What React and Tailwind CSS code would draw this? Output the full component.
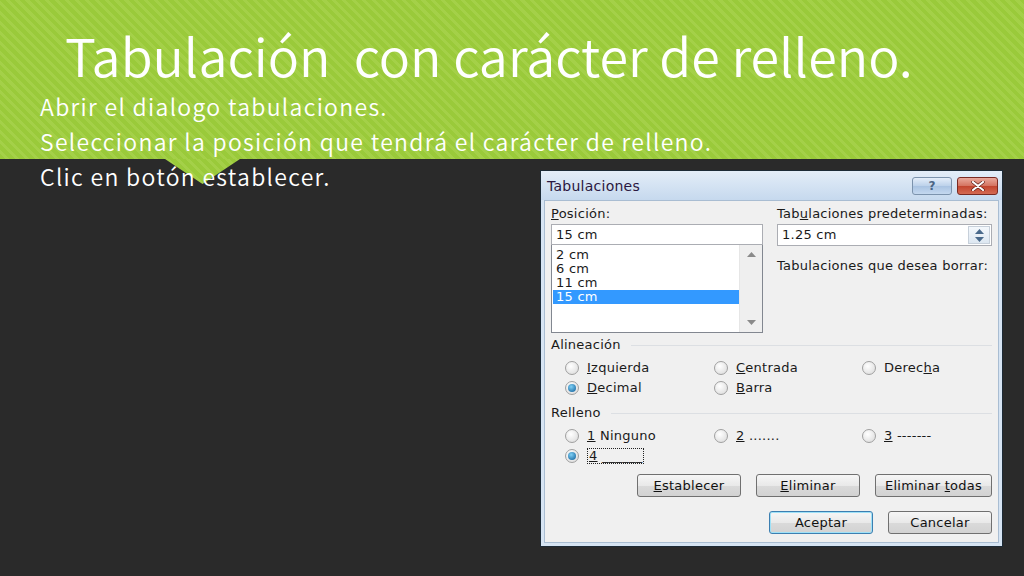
import React from 'react'

// Radio button as drawn by Windows 7 classic dialogs
function Radio({ checked }) {
  return (
    <span className="inline-flex h-[14px] w-[14px] shrink-0 items-center justify-center rounded-full border border-[#a0a0a0] bg-[radial-gradient(circle_at_40%_35%,#ffffff,#d8d8d8)]">
      {checked && (
        <span className="h-[8px] w-[8px] rounded-full bg-[radial-gradient(circle_at_40%_35%,#7fd0f5,#0c5a96)]" />
      )}
    </span>
  )
}

function Option({ checked, children, focus }) {
  return (
    <div className="flex h-[20px] items-center gap-[8px]">
      <Radio checked={checked} />
      <span className={focus ? 'border border-dotted border-[#222] px-[1px] leading-[14px]' : ''}>{children}</span>
    </div>
  )
}

function GroupLabel({ children }) {
  return (
    <div className="flex h-[20px] items-center gap-[10px]">
      <span>{children}</span>
      <div className="h-px flex-1 bg-[#dcdfe3]" />
    </div>
  )
}

function Btn({ children, w, primary }) {
  return (
    <button
      className={
        'h-[23px] rounded-[3px] border bg-[linear-gradient(#f6f6f6,#e9e9e9_50%,#dadada_51%,#d2d2d2)] text-[#111] ' +
        w +
        (primary ? ' border-[#3c7fb1] shadow-[inset_0_0_0_1px_#9fe1f7]' : ' border-[#707070]')
      }
    >
      {children}
    </button>
  )
}

function Arrow({ up, color = '#8a8a8a' }) {
  return (
    <svg width="9" height="5" viewBox="0 0 9 5">
      <path d={up ? 'M0 5 L4.5 0 L9 5 Z' : 'M0 0 L4.5 5 L9 0 Z'} fill={color} />
    </svg>
  )
}

function Dialog() {
  return (
    <div className="flex h-[377px] w-[463px] flex-col border border-[#1c2a36] bg-[#d6e4f3] font-['DejaVu_Sans',sans-serif] text-[13px] font-normal tracking-[0.25px] text-[#1a1a1a]">
      {/* Title bar */}
      <div className="flex h-[29px] items-center bg-[linear-gradient(#e3edf8,#c6d9ee)] pl-[6px] pr-[4px]">
        <span className="pt-[2px] text-[14px] text-[#2a1840]">Tabulaciones</span>
        <span className="flex-1" />
        <div className="flex gap-[5px]">
          <div className="flex h-[18px] w-[40px] items-center justify-center rounded-[3px] border border-[#7c93ad] bg-[linear-gradient(#e4eefa,#bcd1ea_50%,#a9c3e2_51%,#c4d8ef)] text-[12px] font-bold text-[#4b6584]">
            ?
          </div>
          <div className="flex h-[18px] w-[41px] items-center justify-center rounded-[3px] border border-[#7a2a22] bg-[linear-gradient(#e9a99c,#d4725f_50%,#c2442e_51%,#d46a52)]">
            <svg width="14" height="10" viewBox="0 0 14 10">
              <path d="M2 1 L12 9 M12 1 L2 9" stroke="#5a1a14" strokeWidth="3.4" strokeLinecap="round" />
              <path d="M2 1 L12 9 M12 1 L2 9" stroke="#fff" strokeWidth="2.2" strokeLinecap="round" />
            </svg>
          </div>
        </div>
      </div>

      {/* Body */}
      <div className="mx-[3px] mb-[3px] flex flex-1 flex-col border border-[#a9bdd2] bg-[#f0f0f0] pl-[6px] pr-[6px]">
        <div className="flex h-[133px] gap-[14px]">
          {/* Left column */}
          <div className="flex w-[214px] flex-col">
            <div className="h-[23px] pt-[5px] leading-[16px]">
              <span className="underline">P</span>osición:
            </div>
            <div className="flex h-[21px] items-center border border-[#abadb3] bg-white px-[4px]">15 cm</div>
            <div className="flex h-[88px] border border-t-0 border-[#828790] bg-white">
              <div className="flex flex-1 flex-col pt-[3px] pl-[1px] leading-[14px]">
                <div className="pl-[3px]">2 cm</div>
                <div className="pl-[3px]">6 cm</div>
                <div className="pl-[3px]">11 cm</div>
                <div className="bg-[#3399ff] pl-[3px] text-white">15 cm</div>
              </div>
              <div className="flex w-[23px] flex-col items-center justify-between border-l border-[#e6e6e6] bg-[#efefef] py-[7px]">
                <Arrow up />
                <Arrow />
              </div>
            </div>
          </div>
          {/* Right column */}
          <div className="flex w-[217px] flex-col">
            <div className="h-[23px] pt-[5px] leading-[16px]">
              Tab<span className="underline">u</span>laciones predeterminadas:
            </div>
            <div className="flex h-[22px] items-center border border-[#abadb3] bg-white pl-[4px]">
              <span className="flex-1">1.25 cm</span>
              <div className="mr-[1px] flex h-[18px] w-[22px] flex-col items-center justify-center gap-[3px] border border-[#c7d0da] bg-[linear-gradient(#f4f8fc,#dde7f1)]">
                <Arrow up color="#4a6a8c" />
                <Arrow color="#4a6a8c" />
              </div>
            </div>
            <div className="mt-[12px] leading-[16px]">Tabulaciones que desea borrar:</div>
          </div>
        </div>

        <div className="mt-[1px]">
          <GroupLabel>Alineación</GroupLabel>
        </div>
        <div className="mt-[3px] grid grid-cols-[149px_148px_auto] pl-[14px]">
          <Option><span className="underline">I</span>zquierda</Option>
          <Option><span className="underline">C</span>entrada</Option>
          <Option>Derec<span className="underline">h</span>a</Option>
          <Option checked><span className="underline">D</span>ecimal</Option>
          <Option><span className="underline">B</span>arra</Option>
        </div>

        <div className="mt-[5px]">
          <GroupLabel>Relleno</GroupLabel>
        </div>
        <div className="mt-[3px] grid grid-cols-[149px_148px_auto] pl-[14px]">
          <Option><span className="underline">1</span> Ninguno</Option>
          <Option><span className="underline">2</span> .......</Option>
          <Option><span className="underline">3</span> -------</Option>
          <Option checked focus><span className="underline">4</span> ______</Option>
        </div>

        <div className="mt-[8px] flex justify-end gap-[15px]">
          <Btn w="w-[104px]"><span className="underline">E</span>stablecer</Btn>
          <Btn w="w-[104px]"><span className="underline">E</span>liminar</Btn>
          <Btn w="w-[117px]">Eliminar <span className="underline">t</span>odas</Btn>
        </div>
        <div className="mt-[14px] flex justify-end gap-[15px]">
          <Btn w="w-[104px]" primary>Aceptar</Btn>
          <Btn w="w-[104px]">Cancelar</Btn>
        </div>
      </div>
    </div>
  )
}

export default function App() {
  return (
    <div className="h-[576px] w-[1024px] overflow-hidden bg-[#2a2a2a] font-['Noto_Sans_CJK_JP',sans-serif] text-white">
      {/* Green header band */}
      <header className="relative h-[159px] bg-[repeating-linear-gradient(45deg,#9aca3a_0px,#9aca3a_4px,#a4d048_4px,#a4d048_7px)] pl-[40px]">
        <h1 className="pl-[25px] pt-[27px] text-[52px] font-[350] leading-[56px]">Tabulación&nbsp; con carácter de relleno.</h1>
        <p className="mt-[6px] text-[23px] font-[350] leading-[35px] tracking-[1.3px]">Abrir el dialogo tabulaciones.</p>
        <p className="text-[23px] font-[350] leading-[35px] tracking-[1.3px]">Seleccionar la posición que tendrá el carácter de relleno.</p>
        <div className="absolute left-[165px] top-full h-[25px] w-[75px] bg-[repeating-linear-gradient(45deg,#9aca3a_0px,#9aca3a_4px,#a4d048_4px,#a4d048_7px)] [clip-path:polygon(0_0,100%_0,50%_100%)]" />
      </header>

      <main className="flex">
        <p className="relative z-10 pl-[40px] text-[23px] font-[350] leading-[35px] tracking-[1.3px]">Clic en botón establecer.</p>
        <div className="ml-auto mr-[21px] mt-[11px]">
          <Dialog />
        </div>
      </main>
    </div>
  )
}
